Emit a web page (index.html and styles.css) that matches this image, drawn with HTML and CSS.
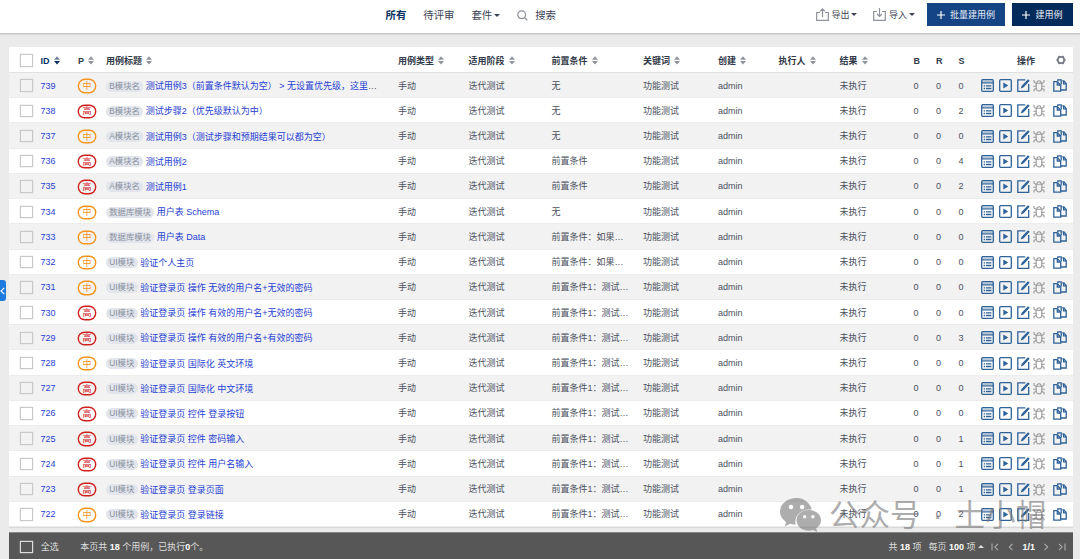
FILE: index.html
```html
<!DOCTYPE html>
<html lang="zh-CN">
<head>
    <meta charset="UTF-8">
    <meta name="viewport" content="width=device-width, initial-scale=1.0">
    <title>用例</title>
    <link rel="stylesheet" href="styles.css">
</head>
<body>
    <!-- icon sprites -->
    <svg class="sprites">
        <symbol id="i-sort" viewBox="0 0 6 9"><path d="M3 0.3L6 3.7H0z"/><path d="M0 5.1h6L3 8.6z"/></symbol>
        <symbol id="i-sort-down" viewBox="0 0 6 9"><path opacity=".6" d="M3 0.3L6 3.7H0z"/><path d="M0 5.1h6L3 8.6z"/></symbol>
        <symbol id="i-detail" viewBox="0 0 13 13">
            <rect x=".7" y=".7" width="11.6" height="11.6" rx="1" fill="none" stroke="currentColor" stroke-width="1.3"/>
            <path d="M1 3.9h11" stroke="currentColor" stroke-width="1.2" fill="none"/>
            <path d="M1 2.3h11" stroke="currentColor" stroke-width="1.6" opacity=".35" fill="none"/>
            <path d="M2.7 6.900h1.400M5 6.900h5.400M2.700 9.500h1.400M5 9.500h5.400" stroke="currentColor" stroke-width="1.3" fill="none"/>
        </symbol>
        <symbol id="i-run" viewBox="0 0 13 13">
            <rect x=".7" y=".7" width="11.6" height="11.6" rx="1" fill="none" stroke="currentColor" stroke-width="1.3"/>
            <path d="M4.300 3.400v6.200L9.300 6.500z"/>
        </symbol>
        <symbol id="i-edit" viewBox="0 0 13 13">
            <path d="M8.3.9H.8v11.4h10.9V5" fill="none" stroke="currentColor" stroke-width="1.3"/>
            <path d="M11 .3l1.7 1.5L6.400 8.400l-2.700 1 1-2.600z"/>
        </symbol>
        <symbol id="i-bug" viewBox="0 0 12 13">
            <g fill="none" stroke="currentColor" stroke-width="1.1">
                <path d="M3.200 4.200h5.600v4.600c0 4.200-5.600 4.200-5.600 0zM3.900 4c0-3 4.200-3 4.200 0"/>
                <path d="M1 1v2l2.200 1.600M11 1v2L8.800 4.600M.2 7.200h3M8.800 7.200h3M1 12.500v-2l2.300-1.300M11 12.500v-2L8.700 9.200"/>
            </g>
        </symbol>
        <symbol id="i-copy" viewBox="0 0 14 13">
            <g fill="none" stroke="currentColor" stroke-width="1.3">
                <path d="M8 11h5.200V4.500L10.900 1.800H9.300"/>
                <path d="M4.300 2.700H.8v9.500h6.900V6L4.300 2.700"/>
                <path d="M4.300 3v3h3M10.600 2v2.800h2.500M4.800 2.500V.8h3.400V5.500"/>
            </g>
        </symbol>
        <symbol id="i-export" viewBox="0 0 13 13"><path d="M4 4.500H.7v7.800h11.600V4.500H9M6.500 9V1M4.100 3.300L6.500.9l2.400 2.400" fill="none" stroke="currentColor" stroke-width="1.200"/></symbol>
        <symbol id="i-import" viewBox="0 0 13 13"><path d="M4 3.500H.7v8.800h11.600V3.500H9M6.500 0v8.300M4.100 6l2.400 2.400L8.900 6" fill="none" stroke="currentColor" stroke-width="1.200"/></symbol>
    </svg>

    <div class="topbar">
        <div class="tabs">
            <a class="active">所有</a>
            <a>待评审</a>
            <a>套件<i class="caret"></i></a>
            <a class="search">
                <svg viewBox="0 0 11 11"><circle cx="4.700" cy="4.700" r="3.900"/><path d="M7.500 7.500l2.800 2.800"/></svg>搜索
            </a>
        </div>
        <div class="actions">
            <a class="io"><svg><use href="#i-export"/></svg>导出<i class="caret"></i></a>
            <a class="io"><svg><use href="#i-import"/></svg>导入<i class="caret"></i></a>
            <button class="btn batch"><svg viewBox="0 0 8 8"><path d="M4 0v8M0 4h8"/></svg>批量建用例</button>
            <button class="btn create"><svg viewBox="0 0 8 8"><path d="M4 0v8M0 4h8"/></svg>建用例</button>
        </div>
    </div>

    <div class="main">
        <div class="table">
            <div class="row head">
                <span><i class="check"></i></span>
                <span class="sorted">ID<svg class="sort"><use href="#i-sort-down"/></svg></span>
                <span>P<svg class="sort"><use href="#i-sort"/></svg></span>
                <span>用例标题<svg class="sort"><use href="#i-sort"/></svg></span>
                <span>用例类型<svg class="sort"><use href="#i-sort"/></svg></span>
                <span>适用阶段<svg class="sort"><use href="#i-sort"/></svg></span>
                <span>前置条件<svg class="sort"><use href="#i-sort"/></svg></span>
                <span>关键词<svg class="sort"><use href="#i-sort"/></svg></span>
                <span>创建<svg class="sort"><use href="#i-sort"/></svg></span>
                <span>执行人<svg class="sort"><use href="#i-sort"/></svg></span>
                <span>结果<svg class="sort"><use href="#i-sort"/></svg></span>
                <span>B</span>
                <span>R</span>
                <span>S</span>
                <span class="ops-head">操作<svg class="gear" viewBox="0 0 10 10"><circle cx="5" cy="5" r="3.200"/><path d="M.3 5h1.500M8.200 5h1.500M2.600 1l.8 1.300M7.400 1l-.8 1.300M2.600 9l.8-1.300M7.400 9l-.8-1.300"/></svg></span>
            </div>
            <div id="rows"></div>
        </div>
        <div class="footer">
            <i class="check"></i>
            <span class="all">全选</span>
            <span class="summary">本页共 <b>18</b> 个用例，已执行<b>0</b>个。</span>
            <div class="pager">
                <span>共 <b>18</b> 项</span>
                <span class="size">每页 <b>100</b> 项<i class="caret up"></i></span>
                <svg viewBox="0 0 8 8"><path d="M1 .5v7M7 .8L3.800 4 7 7.200"/></svg>
                <svg viewBox="0 0 8 8"><path d="M5.500.8L2.300 4l3.200 3.200"/></svg>
                <b>1/1</b>
                <svg viewBox="0 0 8 8"><path d="M2.500.8L5.700 4 2.500 7.200"/></svg>
                <svg viewBox="0 0 8 8"><path d="M7 .5v7M1 .8L4.200 4 1 7.200"/></svg>
            </div>
        </div>
    </div>

    <div class="collapse"><svg viewBox="0 0 5 8"><path d="M4.300.8L1 4l3.300 3.200"/></svg></div>

    <div class="watermark">
        <svg viewBox="0 0 41 34">
            <path fill-rule="evenodd" d="M16.500 0C7.400 0 0 6 0 13.500c0 4.200 2.400 8 6.200 10.400L4.700 28.500l5.400-2.700c2 .6 3.700.8 5.600.8C13.700 18 20.500 11.500 29.500 11.500h2.300C30.200 4.900 24 0 16.500 0zM11 6.800a2.200 2.200 0 1 1 0 4.400 2.200 2.200 0 0 1 0-4.400zm11.200 0a2.200 2.200 0 1 1 0 4.400 2.200 2.200 0 0 1 0-4.400z"/>
            <path fill-rule="evenodd" d="M41 22.300c0-6.100-5.700-10.300-12.200-10.300-7 0-12.300 4.700-12.300 10.300 0 5.800 5.300 10.400 12.300 10.400 1.500 0 2.900-.3 4.300-.7l4.200 2-1.200-3.700c3-1.900 4.900-4.700 4.900-8zM24.700 17a1.700 1.700 0 1 1 0 3.400 1.700 1.700 0 0 1 0-3.400zm8.200 0a1.700 1.700 0 1 1 0 3.400 1.700 1.700 0 0 1 0-3.400z"/>
        </svg>
        <span>公众号</span><span class="dot">·</span><span>土小帽</span>
    </div>

    <script src="script.js"></script>
</body>
</html>
```
FILE: styles.css
```css
body {
    margin: 0;
    height: 559px;
    overflow: hidden;
    background-color: #ebebeb;
    color: #4b5160;
    font-family: "Liberation Sans", "Noto Sans CJK SC", sans-serif;
    font-size: 9px;
    line-height: 12px;
    position: relative;
}
svg {
    fill: currentColor;
    flex: none;
}
.sprites {
    display: none;
}
.topbar {
    display: flex;
    justify-content: space-between;
    height: 33px;
    padding: 0 7px 0 385.5px;
    background-color: #fff;
    border-bottom: 1px solid #c8c8c8;
    box-shadow: 0 1px 1px rgba(0, 0, 0, 0.08);
}
.tabs {
    display: flex;
    gap: 17px;
    height: 31px;
    align-items: center;
    font-size: 10.4px;
    color: #3c4353;
}
.tabs a {
    display: flex;
    align-items: center;
}
.tabs .active {
    color: #0c3263;
    font-weight: bold;
}
.tabs .search svg {
    width: 11px;
    height: 11px;
    margin-right: 7px;
    fill: none;
    stroke: #8a8f99;
    stroke-width: 1.2;
}
.caret {
    width: 0;
    height: 0;
    margin-left: 2px;
    border: 3px solid transparent;
    border-top: 3.5px solid #3c4353;
    border-bottom: 0;
}
.caret.up {
    margin-left: 3px;
    border-top: 0;
    border-bottom: 3px solid #ddd;
}
.actions {
    display: flex;
    align-items: center;
    height: 29px;
}
.io {
    display: flex;
    align-items: center;
    margin-right: 16px;
    color: #3c4353;
}
.io + .io {
    margin-right: 12px;
}
.io svg {
    width: 13px;
    height: 13px;
    margin-right: 2.5px;
    color: #8e939c;
}
.btn {
    display: flex;
    align-items: center;
    justify-content: center;
    gap: 5px;
    height: 23px;
    padding: 0;
    border: 0;
    color: #e8eef6;
    font: inherit;
}
.btn svg {
    width: 8px;
    height: 8px;
    stroke: #fff;
    stroke-width: 1.2;
}
.batch {
    width: 78px;
    margin: 0 7px 0 0;
    background-color: #144483;
}
.create {
    width: 61px;
    background-color: #022a5a;
}
.main {
    padding: 13px 7px 0 9px;
}
.table {
    background-color: #fff;
    border-bottom: 1px solid #d8d8d8;
}
.row {
    display: grid;
    grid-template-columns: 20.5px 37.5px 28px 292px 70.5px 83px 91.5px 75px 60.5px 61px 74px 22.5px 22.5px 22.5px 92px;
    align-items: center;
    box-sizing: border-box;
    height: 25.22px;
    padding: 1px 0 0 11px;
    border-bottom: 1px solid #ececec;
    white-space: nowrap;
}
.row:nth-child(odd) {
    background-color: #f2f2f2;
}
.row.head {
    height: 26px;
    padding-top: 2px;
    background-color: #fff;
    border-bottom-color: #e0e0e0;
    color: #333a49;
    font-weight: bold;
}
.head span {
    display: flex;
    align-items: center;
}
.head .sorted {
    color: #0c3263;
}
.sort {
    width: 6px;
    height: 9px;
    margin-left: 4px;
    color: #8e939c;
}
.sorted .sort {
    color: #0c3263;
}
/* the ring is a shadow so that it can be thicker than one pixel */
.check {
    display: block;
    width: 10.4px;
    height: 10.4px;
    margin: 1.2px;
    box-shadow: 0 0 0 1.2px #c9c9c9;
}
.id,
.title a {
    color: #1f41d2;
}
.level {
    display: flex;
    align-items: center;
    justify-content: center;
    box-sizing: border-box;
    width: 15.4px;
    height: 11.4px;
    margin: 1px 1.300px 0;
    border-radius: 6px;
    box-shadow: 0 0 0 1.400px currentColor;
}
.mid {
    color: #f7941d;
}
.high {
    color: #d0201c;
}
.title {
    display: flex;
    align-items: center;
    margin-top: 1px;
}
.tag {
    margin-right: 2.700px;
    padding: 0 3.300px;
    border-radius: 6px;
    background-color: #e2e5eb;
    color: #8a91a0;
    font-size: 8.300px;
    line-height: 11px;
}
.ops {
    display: flex;
    align-items: center;
    color: #2f6299;
}
.ops svg {
    width: 13px;
    height: 13px;
    margin-right: 5px;
}
.ops .i-edit {
    margin-right: 3px;
}
.ops .i-bug {
    width: 12px;
    margin-right: 8px;
    color: #9b9b9b;
}
.ops .i-copy {
    width: 14px;
    margin-right: 0;
}
.ops-head {
    padding-left: 36px;
}
.gear {
    width: 10px;
    height: 10px;
    margin: -2px 0 0 21px;
    fill: none;
    stroke: #777c87;
    stroke-width: 1.7;
}
.footer {
    display: flex;
    align-items: center;
    box-sizing: border-box;
    height: 28px;
    margin-top: 4px;
    padding: 1px 7px 0 11px;
    background-color: #575757;
    border-top: 1px solid #8a8a8a;
    color: #ddd;
}
.footer b {
    color: #fff;
}
.footer .check {
    box-shadow: 0 0 0 1.2px #ddd;
}
.all {
    margin-left: 8px;
}
.summary {
    margin-left: 21.5px;
}
.pager {
    display: flex;
    align-items: center;
    gap: 8px;
    margin-left: auto;
}
.pager .size {
    display: flex;
    align-items: center;
    margin-right: -1px;
    white-space: pre;
}
.pager svg {
    width: 8px;
    height: 8px;
    fill: none;
    stroke: #aaa;
    stroke-width: 1.1;
}
.pager b {
    margin-left: -1px;
}
.pager > span:first-child {
    margin-right: -1px;
}
.pager .size b,
.pager > span:first-child b {
    margin-left: 0;
}
.pager > b {
    margin-right: -1px;
}
/* handle of the folded sidebar */
.collapse {
    position: absolute;
    left: 0;
    top: 280px;
    display: flex;
    align-items: center;
    width: 6px;
    height: 21px;
    border-radius: 0 3px 3px 0;
    background-color: #1d7be0;
}
.collapse svg {
    width: 5px;
    height: 8px;
    fill: none;
    stroke: #fff;
    stroke-width: 1.1;
}
.watermark {
    position: absolute;
    left: 780px;
    top: 498px;
    display: flex;
    align-items: center;
    height: 34px;
    color: #777;
    opacity: 0.6;
    font-size: 30.5px;
    line-height: 34px;
    white-space: nowrap;
}
.watermark svg {
    width: 41px;
    height: 34px;
    margin-right: 8px;
}
.watermark .dot {
    width: 34px;
    text-align: center;
}
```
FILE: script.js
```js
const cases = [
    [739, '中', 'B模块名', '测试用例3（前置条件默认为空） &gt; 无设置优先级，这里', '无', 0],
    [738, '高', 'B模块名', '测试步骤2（优先级默认为中）', '无', 2],
    [737, '中', 'A模块名', '测试用例3（测试步骤和预期结果可以都为空）', '无', 0],
    [736, '高', 'A模块名', '测试用例2', '前置条件', 4],
    [735, '高', 'A模块名', '测试用例1', '前置条件', 2],
    [734, '中', '数据库模块', '用户表 Schema', '无', 0],
    [733, '中', '数据库模块', '用户表 Data', '前置条件：如果…', 0],
    [732, '中', 'UI模块', '验证个人主页', '前置条件：如果…', 0],
    [731, '中', 'UI模块', '验证登录页 操作 无效的用户名+无效的密码', '前置条件1：测试…', 0],
    [730, '高', 'UI模块', '验证登录页 操作 有效的用户名+无效的密码', '前置条件1：测试…', 0],
    [729, '高', 'UI模块', '验证登录页 操作 有效的用户名+有效的密码', '前置条件1：测试…', 3],
    [728, '中', 'UI模块', '验证登录页 国际化 英文环境', '前置条件1：测试…', 0],
    [727, '高', 'UI模块', '验证登录页 国际化 中文环境', '前置条件1：测试…', 0],
    [726, '高', 'UI模块', '验证登录页 控件 登录按钮', '前置条件1：测试…', 0],
    [725, '高', 'UI模块', '验证登录页 控件 密码输入', '前置条件1：测试…', 1],
    [724, '高', 'UI模块', '验证登录页 控件 用户名输入', '前置条件1：测试…', 1],
    [723, '高', 'UI模块', '验证登录页 登录页面', '前置条件1：测试…', 1],
    [722, '中', 'UI模块', '验证登录页 登录链接', '前置条件1：测试…', 2]
];

const icons = ['detail', 'run', 'edit', 'bug', 'copy']
    .map(name => `<svg class="i-${name}"><use href="#i-${name}"/></svg>`)
    .join('');

document.getElementById('rows').innerHTML = cases.map(([id, level, tag, title, pre, steps]) => `
    <div class="row">
        <span><i class="check"></i></span>
        <span class="id">${id}</span>
        <span class="level ${level === '高' ? 'high' : 'mid'}">${level}</span>
        <span class="title"><span class="tag">${tag}</span><a>${title}</a>${id === 739 ? '…' : ''}</span>
        <span>手动</span>
        <span>迭代测试</span>
        <span>${pre}</span>
        <span>功能测试</span>
        <span>admin</span>
        <span></span>
        <span>未执行</span>
        <span>0</span>
        <span>0</span>
        <span>${steps}</span>
        <span class="ops">${icons}</span>
    </div>`).join('');
```
